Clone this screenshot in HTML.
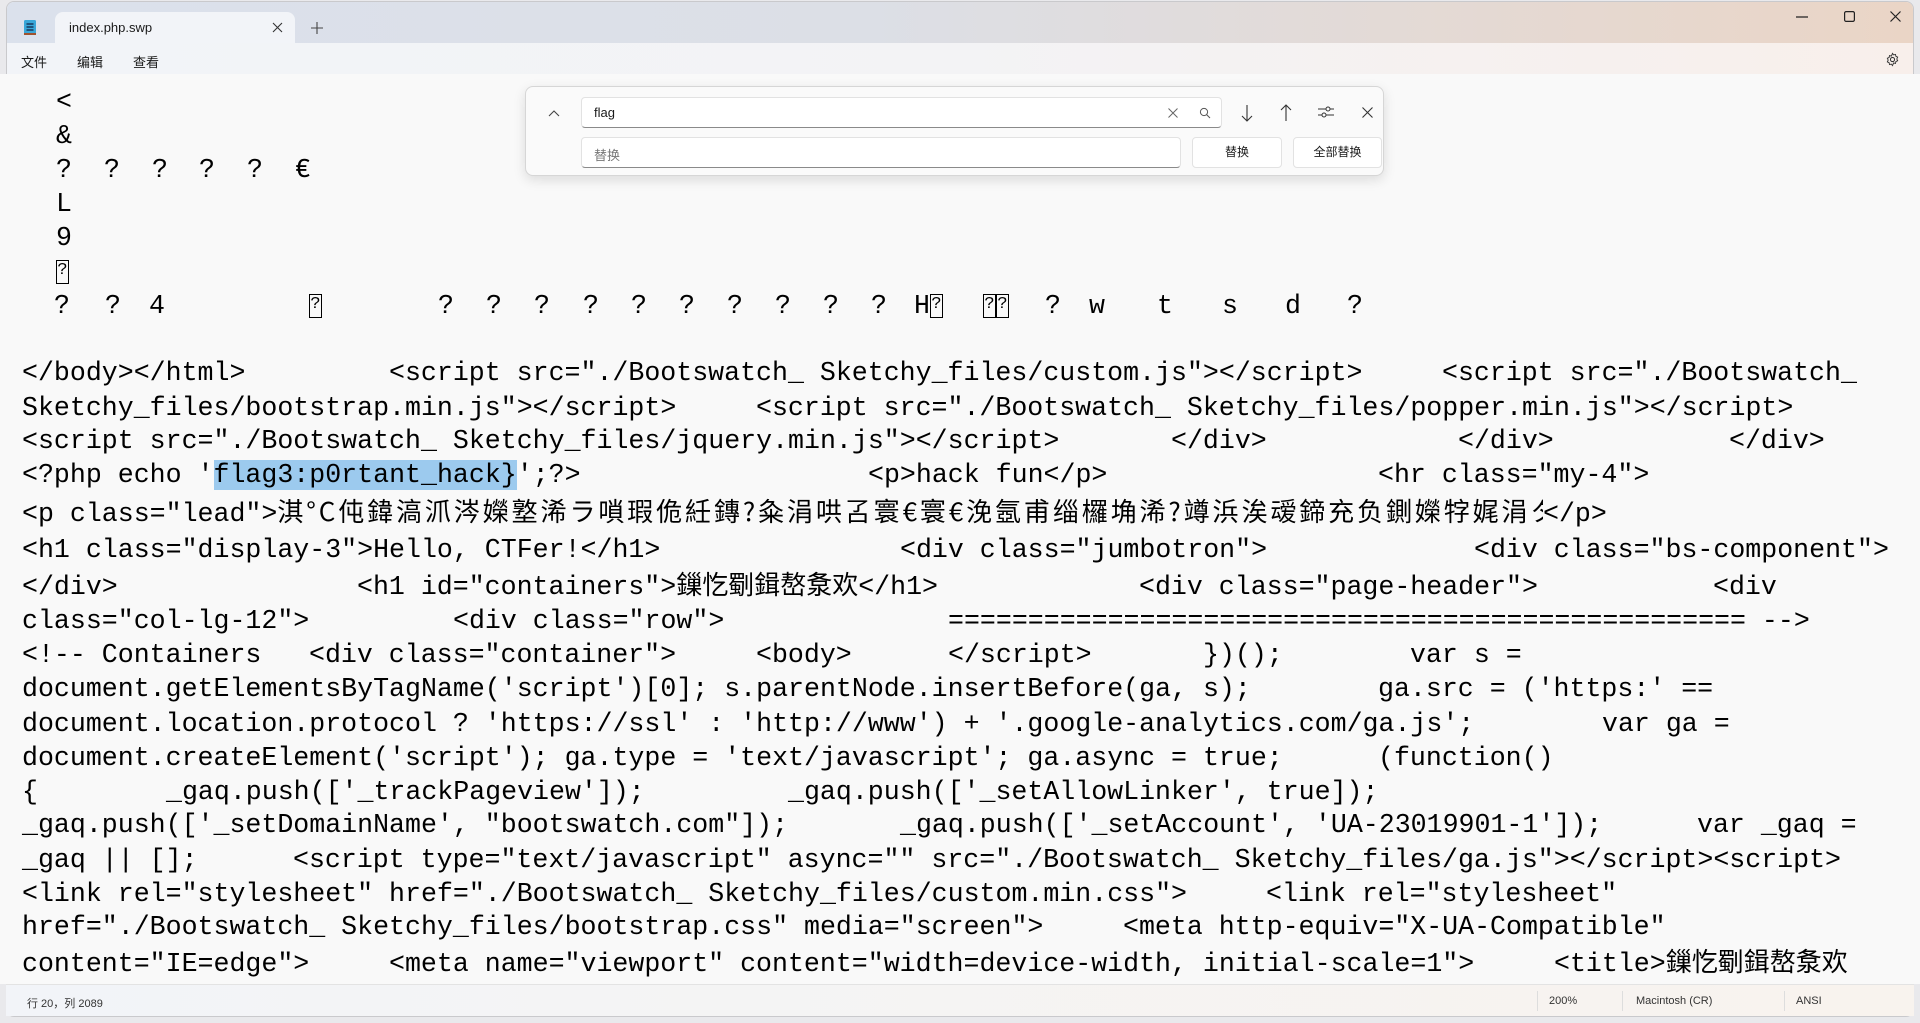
<!DOCTYPE html>
<html><head><meta charset="utf-8"><style>
*{margin:0;padding:0;box-sizing:border-box}
body{width:1920px;height:1023px;background:#e9e9ec;position:relative;overflow:hidden;font-family:"Liberation Sans","Noto Sans CJK SC",sans-serif}
#win{position:absolute;left:6px;top:1px;width:1908px;height:1016px;background:#f9f9f9;border:1px solid #c9c9cc;border-radius:8px;overflow:hidden}
#tabs{position:absolute;left:0;top:0;width:100%;height:41px;background:linear-gradient(90deg,#dbe1ec 0%,#dcdfe6 45%,#ead5c6 100%)}
#tab{position:absolute;left:48px;top:10px;width:240px;height:32px;background:#f2f4f8;border-radius:8px 8px 0 0;font-size:13px;color:#1a1a1a}
#menu{position:absolute;left:0;top:41px;width:100%;height:33px;background:linear-gradient(90deg,#f2f4f8 0%,#f3f3f5 50%,#f8efeb 100%);border-bottom:1px solid #e3e3e3;font-size:13px;color:#1a1a1a}
.m{position:absolute;top:9px}
#ed{position:absolute;left:0;top:74px;width:100%;height:910px;background:#f9f9f9}
.l{position:absolute;font-family:"Liberation Mono","Noto Sans CJK SC",monospace;font-size:26.6px;line-height:34px;white-space:pre;color:#000}
.c{font-family:"Noto Sans CJK SC",sans-serif;font-size:26px;line-height:1}
.b{display:inline-block;width:13px;height:24px;border:1.5px solid #000;font-size:17px;line-height:20px;text-align:center;vertical-align:middle}
#status{position:absolute;left:0;top:984px;width:100%;height:32px;background:linear-gradient(90deg,#f2f4f8,#f8f3ee);border-top:1px solid #e3e3e3;font-size:11px;color:#333}
.s{position:absolute;top:10px}
.sep{position:absolute;top:6px;width:1px;height:20px;background:#ddd}
#find{position:absolute;left:525px;top:86px;width:859px;height:90px;background:#fafafa;border:1px solid #d6d6d6;border-radius:8px;box-shadow:0 4px 12px rgba(0,0,0,.12)}
.in{position:absolute;background:#fff;border:1px solid #e2e2e2;border-bottom:1px solid #8a8a8a;border-radius:4px;font-size:13px}
.btn{position:absolute;background:#fff;border:1px solid #e2e2e2;border-radius:4px;font-size:12px;text-align:center;line-height:28px;color:#1a1a1a}
</style></head><body>
<div id="win">
<div id="tabs">
<svg style="position:absolute;left:16px;top:17px" width="14" height="17" viewBox="0 0 14 17"><rect x="1" y="1" width="12" height="15" rx="1.5" fill="#3aa7d8"/><rect x="1" y="14" width="12" height="2" fill="#a0522d"/><path d="M3.5 5h7M3.5 8h7M3.5 11h7" stroke="#124" stroke-width="1.2"/></svg>
<div id="tab"><span style="position:absolute;left:14px;top:8px">index.php.swp</span>
<svg style="position:absolute;left:217px;top:10px" width="11" height="11"><path d="M1 1L10 10M10 1L1 10" stroke="#333" stroke-width="1.1"/></svg></div>
<svg style="position:absolute;left:304px;top:20px" width="12" height="12"><path d="M6 0V12M0 6H12" stroke="#444" stroke-width="1.1"/></svg>
<svg style="position:absolute;left:1789px;top:14px" width="12" height="2"><path d="M0 1H12" stroke="#222" stroke-width="1.2"/></svg>
<svg style="position:absolute;left:1837px;top:9px" width="11" height="11"><rect x=".6" y=".6" width="9.8" height="9.8" rx="1.5" fill="none" stroke="#222" stroke-width="1.2"/></svg>
<svg style="position:absolute;left:1883px;top:9px" width="11" height="11"><path d="M.5 .5L10.5 10.5M10.5 .5L.5 10.5" stroke="#222" stroke-width="1.2"/></svg>
</div>
<div id="menu"><span class="m" style="left:14px">文件</span><span class="m" style="left:70px">编辑</span><span class="m" style="left:126px">查看</span>
<svg style="position:absolute;left:1878px;top:9px" width="15" height="15" viewBox="0 0 16 16"><circle cx="8" cy="8" r="2.2" fill="none" stroke="#333" stroke-width="1.1"/><path d="M8 1.5l1.2 1.6 2-.5.4 2 1.9.9-.9 1.9.9 1.9-1.9.9-.4 2-2-.5L8 14.5l-1.2-1.6-2 .5-.4-2-1.9-.9.9-1.9-.9-1.9 1.9-.9.4-2 2 .5z" fill="none" stroke="#333" stroke-width="1"/></svg></div>
</div>
<div id="ed"></div>
<div class="l" style="left:56px;top:85px">&lt;</div>
<div class="l" style="left:56px;top:119px">&amp;</div>
<div class="l" style="left:56px;top:153px">?</div><div class="l" style="left:104px;top:153px">?</div><div class="l" style="left:152px;top:153px">?</div><div class="l" style="left:199px;top:153px">?</div><div class="l" style="left:247px;top:153px">?</div><div class="l" style="left:295px;top:153px">€</div>
<div class="l" style="left:56px;top:187px">L</div>
<div class="l" style="left:56px;top:221px">9</div>
<div class="l" style="left:56px;top:255px"><span class="b">?</span></div>
<div class="l" style="left:54px;top:289px">?</div><div class="l" style="left:105px;top:289px">?</div><div class="l" style="left:149px;top:289px">4</div><div class="l" style="left:309px;top:289px"><span class="b">?</span></div>
<div class="l" style="left:438px;top:289px">?</div><div class="l" style="left:486px;top:289px">?</div><div class="l" style="left:534px;top:289px">?</div><div class="l" style="left:583px;top:289px">?</div><div class="l" style="left:631px;top:289px">?</div><div class="l" style="left:679px;top:289px">?</div><div class="l" style="left:727px;top:289px">?</div><div class="l" style="left:775px;top:289px">?</div><div class="l" style="left:823px;top:289px">?</div><div class="l" style="left:871px;top:289px">?</div>
<div class="l" style="left:914px;top:289px">H<span class="b">?</span></div><div class="l" style="left:983px;top:289px"><span class="b">?</span><span class="b">?</span></div>
<div class="l" style="left:1045px;top:289px">?</div><div class="l" style="left:1089px;top:289px">w</div><div class="l" style="left:1157px;top:289px">t</div><div class="l" style="left:1222px;top:289px">s</div><div class="l" style="left:1285px;top:289px">d</div><div class="l" style="left:1347px;top:289px">?</div>

<div class="l" style="left:22px;top:356px">&lt;/body&gt;&lt;/html&gt;</div><div class="l" style="left:389px;top:356px">&lt;script src="./Bootswatch_ Sketchy_files/custom.js"&gt;&lt;/script&gt;</div><div class="l" style="left:1442px;top:356px">&lt;script src="./Bootswatch_</div>
<div class="l" style="left:22px;top:391px">Sketchy_files/bootstrap.min.js"&gt;&lt;/script&gt;</div><div class="l" style="left:756px;top:391px">&lt;script src="./Bootswatch_ Sketchy_files/popper.min.js"&gt;&lt;/script&gt;</div>
<div class="l" style="left:22px;top:424px">&lt;script src="./Bootswatch_ Sketchy_files/jquery.min.js"&gt;&lt;/script&gt;</div><div class="l" style="left:1171px;top:424px">&lt;/div&gt;</div><div class="l" style="left:1458px;top:424px">&lt;/div&gt;</div><div class="l" style="left:1729px;top:424px">&lt;/div&gt;</div>
<div class="l" style="left:22px;top:458px">&lt;?php echo '<span style="background:#9ccaee">flag3:p0rtant_hack}</span>';?&gt;</div><div class="l" style="left:868px;top:458px">&lt;p&gt;hack fun&lt;/p&gt;</div><div class="l" style="left:1378px;top:458px">&lt;hr class="my-4"&gt;</div>
<div class="l" style="left:22px;top:497px;width:1521px;overflow:hidden">&lt;p class="lead"&gt;<span class="c" style="letter-spacing:2.9px">淇°C伅鍏滈沠涔嬫墪浠ラ嗩瑕佹紝鏄?粂涓哄叾寰€寰€浼氬甫缁欏埆浠?竴浜涘叆鍗充负鍘嬫牸娓涓タ</span></div><div class="l" style="left:1543px;top:497px">&lt;/p&gt;</div>
<div class="l" style="left:22px;top:533px">&lt;h1 class="display-3"&gt;Hello, CTFer!&lt;/h1&gt;</div><div class="l" style="left:900px;top:533px">&lt;div class="jumbotron"&gt;</div><div class="l" style="left:1474px;top:533px">&lt;div class="bs-component"&gt;</div>
<div class="l" style="left:22px;top:570px">&lt;/div&gt;</div><div class="l" style="left:357px;top:570px">&lt;h1 id="containers"&gt;<span class="c">鏁忔劅鍓嶅洜欢</span>&lt;/h1&gt;</div><div class="l" style="left:1139px;top:570px">&lt;div class="page-header"&gt;</div><div class="l" style="left:1713px;top:570px">&lt;div</div>
<div class="l" style="left:22px;top:604px">class="col-lg-12"&gt;</div><div class="l" style="left:453px;top:604px">&lt;div class="row"&gt;</div><div class="l" style="left:948px;top:604px">================================================== --&gt;</div>
<div class="l" style="left:22px;top:638px">&lt;!-- Containers</div><div class="l" style="left:309px;top:638px">&lt;div class="container"&gt;</div><div class="l" style="left:756px;top:638px">&lt;body&gt;</div><div class="l" style="left:948px;top:638px">&lt;/script&gt;</div><div class="l" style="left:1203px;top:638px">})();</div><div class="l" style="left:1410px;top:638px">var s =</div>
<div class="l" style="left:22px;top:672px">document.getElementsByTagName('script')[0]; s.parentNode.insertBefore(ga, s);</div><div class="l" style="left:1378px;top:672px">ga.src = ('https:' ==</div>
<div class="l" style="left:22px;top:707px">document.location.protocol ? 'https://ssl' : 'http://www') + '.google-analytics.com/ga.js';</div><div class="l" style="left:1602px;top:707px">var ga =</div>
<div class="l" style="left:22px;top:741px">document.createElement('script'); ga.type = 'text/javascript'; ga.async = true;</div><div class="l" style="left:1378px;top:741px">(function()</div>
<div class="l" style="left:22px;top:775px">{</div><div class="l" style="left:166px;top:775px">_gaq.push(['_trackPageview']);</div><div class="l" style="left:788px;top:775px">_gaq.push(['_setAllowLinker', true]);</div>
<div class="l" style="left:22px;top:808px">_gaq.push(['_setDomainName', "bootswatch.com"]);</div><div class="l" style="left:900px;top:808px">_gaq.push(['_setAccount', 'UA-23019901-1']);</div><div class="l" style="left:1697px;top:808px">var _gaq =</div>
<div class="l" style="left:22px;top:843px">_gaq || [];</div><div class="l" style="left:293px;top:843px">&lt;script type="text/javascript" async="" src="./Bootswatch_ Sketchy_files/ga.js"&gt;&lt;/script&gt;&lt;script&gt;</div>
<div class="l" style="left:22px;top:877px">&lt;link rel="stylesheet" href="./Bootswatch_ Sketchy_files/custom.min.css"&gt;</div><div class="l" style="left:1266px;top:877px">&lt;link rel="stylesheet"</div>
<div class="l" style="left:22px;top:910px">href="./Bootswatch_ Sketchy_files/bootstrap.css" media="screen"&gt;</div><div class="l" style="left:1123px;top:910px">&lt;meta http-equiv="X-UA-Compatible"</div>
<div class="l" style="left:22px;top:947px">content="IE=edge"&gt;</div><div class="l" style="left:389px;top:947px">&lt;meta name="viewport" content="width=device-width, initial-scale=1"&gt;</div><div class="l" style="left:1554px;top:947px">&lt;title&gt;<span class="c">鏁忔劅鍓嶅洜欢</span></div>

<div id="status" style="left:6px;width:1908px">
<span class="s" style="left:21px">行 20，列 2089</span>
<div class="sep" style="left:1531px"></div><span class="s" style="left:1543px">200%</span>
<div class="sep" style="left:1616px"></div><span class="s" style="left:1630px">Macintosh (CR)</span>
<div class="sep" style="left:1778px"></div><span class="s" style="left:1790px">ANSI</span>
</div>

<div id="find">
<svg style="position:absolute;left:22px;top:22px" width="12" height="8"><path d="M1 7L6 2L11 7" fill="none" stroke="#444" stroke-width="1.1"/></svg>
<div class="in" style="left:55px;top:10px;width:641px;height:31px"><span style="position:absolute;left:12px;top:7px;color:#1a1a1a">flag</span>
<svg style="position:absolute;left:586px;top:10px" width="10" height="10"><path d="M.5 .5L9.5 9.5M9.5 .5L.5 9.5" stroke="#666"/></svg>
<svg style="position:absolute;left:617px;top:9px" width="12" height="12"><circle cx="5" cy="5" r="3.6" fill="none" stroke="#555"/><path d="M7.6 7.6L11 11" stroke="#555"/></svg></div>
<div class="in" style="left:55px;top:50px;width:600px;height:31px"><span style="position:absolute;left:12px;top:7px;color:#777">替换</span></div>
<div class="btn" style="left:666px;top:50px;width:90px;height:31px">替换</div>
<div class="btn" style="left:767px;top:50px;width:89px;height:31px">全部替换</div>
<svg style="position:absolute;left:715px;top:18px" width="12" height="17"><path d="M6 0V16M1 11L6 16L11 11" fill="none" stroke="#333" stroke-width="1.1"/></svg>
<svg style="position:absolute;left:754px;top:17px" width="12" height="17"><path d="M6 17V1M1 6L6 1L11 6" fill="none" stroke="#333" stroke-width="1.1"/></svg>
<svg style="position:absolute;left:792px;top:18px" width="16" height="14"><path d="M0 4H16M0 10H16" stroke="#333"/><circle cx="10" cy="4" r="2" fill="#fafafa" stroke="#333"/><circle cx="6" cy="10" r="2" fill="#fafafa" stroke="#333"/></svg>
<svg style="position:absolute;left:836px;top:20px" width="11" height="11"><path d="M.5 .5L10.5 10.5M10.5 .5L.5 10.5" stroke="#333" stroke-width="1.1"/></svg>
</div>
</body></html>
